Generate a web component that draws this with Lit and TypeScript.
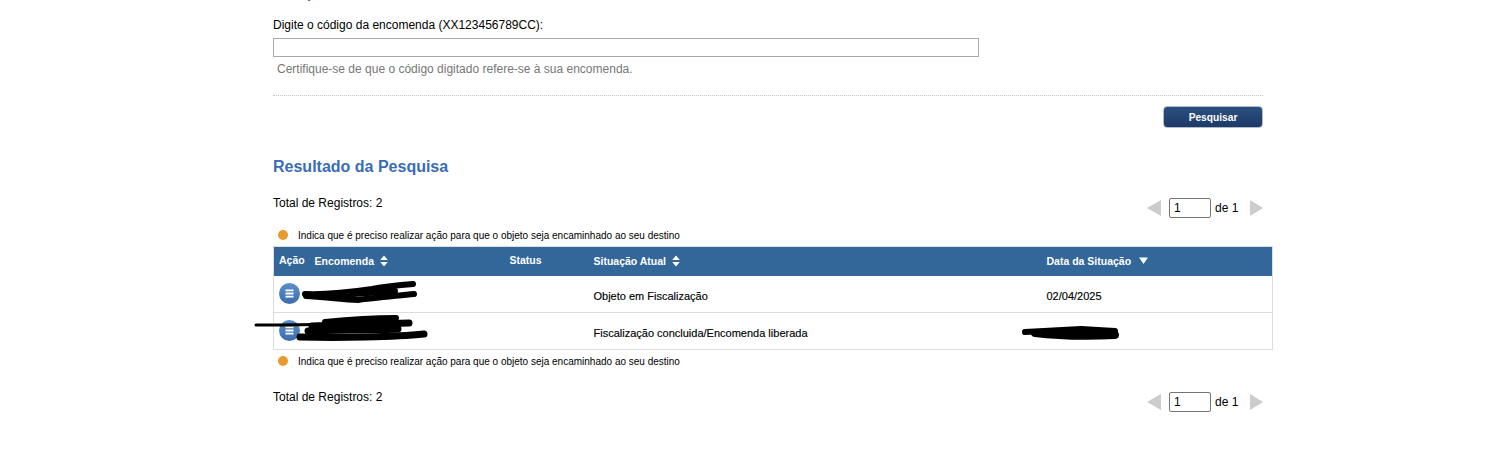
import { LitElement, html, css, svg } from "lit";
import { customElement } from "lit/decorators.js";

const sortBoth = html`<svg class="sort" width="8" height="12" viewBox="0 0 8 12"><path d="M4 0.5 L7.8 5 H0.2 Z M0.2 7 H7.8 L4 11.5 Z" fill="#fff"/></svg>`;
const sortDown = html`<svg class="sort" width="9" height="7" viewBox="0 0 9 7"><path d="M0 0.5 H9 L4.5 7 Z" fill="#fff"/></svg>`;
const rowIcon = html`<span class="ico"><svg width="9" height="9" viewBox="0 0 9 9"><path d="M0.5 0.5H8.5V2.3H0.5ZM0.5 3.6H8.5V5.4H0.5ZM0.5 6.7H8.5V8.5H0.5Z" fill="#fff"/></svg></span>`;

@customElement("page-bar")
class PageBar extends LitElement {
  static styles = css`
    :host { display: flex; align-items: center; justify-content: flex-end; font: 12px "Liberation Sans", Arial, sans-serif; color: #000; }
    .box { height: 18px; border: 1px solid #767676; border-radius: 2px; margin: 0 4px 0 8px; padding: 0 0 0 4px; box-sizing: content-box; width: 36px; font: 12px "Liberation Sans", Arial, sans-serif; display: flex; align-items: center; }
    .of { width: 22px; margin-right: 13px; white-space: nowrap; }
    svg { display: block; }
  `;
  render() {
    return html`
      <svg width="14" height="16" viewBox="0 0 14 16"><path d="M14 0V16L0 8Z" fill="#ccc"/></svg>
      <span class="box">1</span>
      <span class="of">de 1</span>
      <svg width="13" height="16" viewBox="0 0 13 16"><path d="M0 0V16L13 8Z" fill="#ccc"/></svg>
    `;
  }
}

@customElement("app-root")
class AppRoot extends LitElement {
  static styles = css`
    :host { display: block; height: 449px; overflow: hidden; background: #fff; font: 12px "Liberation Sans", Arial, sans-serif; color: #000; }
    .wrap { width: 1000px; margin: -17px 0 0 273px; position: relative; }
    h2 { margin: 0; font: bold 16px/20px "Liberation Sans", Arial, sans-serif; color: #3a6db5; }
    .label { margin-top: 15px; line-height: 14px; height: 14px; }
    .field { display: block; width: 706px; height: 19px; box-sizing: border-box; margin-top: 6px; border: 1px solid #a9a9a9; }
    .hint { margin: 5px 0 0 4px; line-height: 14px; color: #777; }
    .rule { width: 990px; margin-top: 19px; border-top: 1px dotted #c4c4c4; }
    .actions { width: 990px; display: flex; justify-content: flex-end; margin-top: 10px; }
    .btn { width: 100px; height: 22px; box-sizing: border-box; display: flex; align-items: center; justify-content: center; border: 1px solid #b4bcc8; border-radius: 4px; background: linear-gradient(#2a5080, #1d3a68); color: #fff; font: bold 10.2px "Liberation Sans", Arial, sans-serif; }
    .result { margin-top: 29px; }
    .pager { display: flex; justify-content: space-between; width: 990px; }
    .top { margin-top: 19px; height: 33px; }
    .total { line-height: 14px; margin-top: 0; }
    page-bar { margin-top: 2px; height: 20px; }
    .legend { display: flex; align-items: center; margin-left: 5px; height: 14px; font-size: 10px; line-height: 14px; }
    .dot { width: 10px; height: 10px; border-radius: 50%; background: #e89a2e; margin-right: 10px; margin-top: -2px; }
    table { width: 1000px; table-layout: fixed; border-collapse: collapse; margin-top: 3px; font-size: 11px; }
    th { background: #336699; color: #fff; height: 29px; padding: 0; text-align: left; font-weight: bold; font-size: 10.5px; border-top: 1px solid #ddd; white-space: nowrap; }
    th:first-child { border-left: 1px solid #ddd; }
    th:last-child { border-right: 1px solid #ddd; }
    th .in, td .in { padding-left: 6px; display: flex; align-items: center; }
    th:first-child .in { padding-left: 5px; }
    th .in { margin-top: -2px; }
    th .raise { margin-top: -3px; }
    .sort { margin-left: 6px; display: block; }
    td { height: 36px; padding: 0; border-bottom: 1px solid #ddd; }
    td:first-child { border-left: 1px solid #ddd; }
    td:last-child { border-right: 1px solid #ddd; }
    .ico { width: 21px; height: 21px; flex: none; border-radius: 50%; background: linear-gradient(#5b8fc9, #3c6cb0); display: flex; align-items: center; justify-content: center; margin-left: -1px; margin-top: -1px; }
    .val { padding-top: 3px; -webkit-text-stroke: 0.15px #000; }
    .low { margin-top: 5px; }
    .bottom { margin-top: 21px; }
    .ink { position: absolute; left: -273px; top: 17px; pointer-events: none; }
    .ink path { fill: none; stroke: #000; stroke-linecap: round; stroke-linejoin: round; }
  `;
  render() {
    const ink = svg`
      <path stroke-width="6" d="M305 294 C330 295 352 292 372 289 C388 286 400 285 413 284"/>
      <path stroke-width="6" d="M306 296 C325 297 345 300 358 300 C372 298 395 296 414 294"/>
      <path stroke-width="6" d="M340 295 L395 291"/>
      <path stroke-width="3" d="M256 325 C280 325 305 325 330 324"/>
      <path stroke-width="6" d="M325 322 C345 320 375 318 396 318"/>
      <path stroke-width="7" d="M312 326 C345 325 385 324 409 323"/>
      <path stroke-width="7" d="M308 331 C340 330 375 330 398 329"/>
      <path stroke-width="7" d="M300 337 C340 338 395 337 424 334"/>
      <path stroke-width="6" d="M1025 332 C1045 331 1065 330 1081 329 L1115 331"/>
      <path stroke-width="8" d="M1035 333 C1060 336 1095 336 1115 335"/>
    `;
    return html`
      <div class="wrap">
        <h2>Pesquisa</h2>
        <div class="label">Digite o código da encomenda (XX123456789CC):</div>
        <div class="field" role="textbox"></div>
        <div class="hint">Certifique-se de que o código digitado refere-se à sua encomenda.</div>
        <div class="rule"></div>
        <div class="actions"><div class="btn">Pesquisar</div></div>
        <h2 class="result">Resultado da Pesquisa</h2>
        <div class="pager top"><div class="total">Total de Registros: 2</div><page-bar></page-bar></div>
        <div class="legend"><span class="dot"></span>Indica que é preciso realizar ação para que o objeto seja encaminhado ao seu destino</div>
        <table>
          <colgroup><col style="width:35px" /><col style="width:195px" /><col style="width:84px" /><col style="width:453px" /><col /></colgroup>
          <thead>
            <tr>
              <th><div class="in raise">Ação</div></th>
              <th><div class="in">Encomenda ${sortBoth}</div></th>
              <th><div class="in raise">Status</div></th>
              <th><div class="in">Situação Atual ${sortBoth}</div></th>
              <th><div class="in">Data da Situação <span style="width:2px"></span>${sortDown}</div></th>
            </tr>
          </thead>
          <tbody>
            <tr><td><div class="in">${rowIcon}</div></td><td></td><td></td><td><div class="in val">Objeto em Fiscalização</div></td><td><div class="in val">02/04/2025</div></td></tr>
            <tr><td><div class="in">${rowIcon}</div></td><td></td><td></td><td><div class="in val">Fiscalização concluida/Encomenda liberada</div></td><td></td></tr>
          </tbody>
        </table>
        <div class="legend low"><span class="dot"></span>Indica que é preciso realizar ação para que o objeto seja encaminhado ao seu destino</div>
        <div class="pager bottom"><div class="total">Total de Registros: 2</div><page-bar></page-bar></div>
        <svg class="ink" width="1494" height="449">${ink}</svg>
      </div>
    `;
  }
}
